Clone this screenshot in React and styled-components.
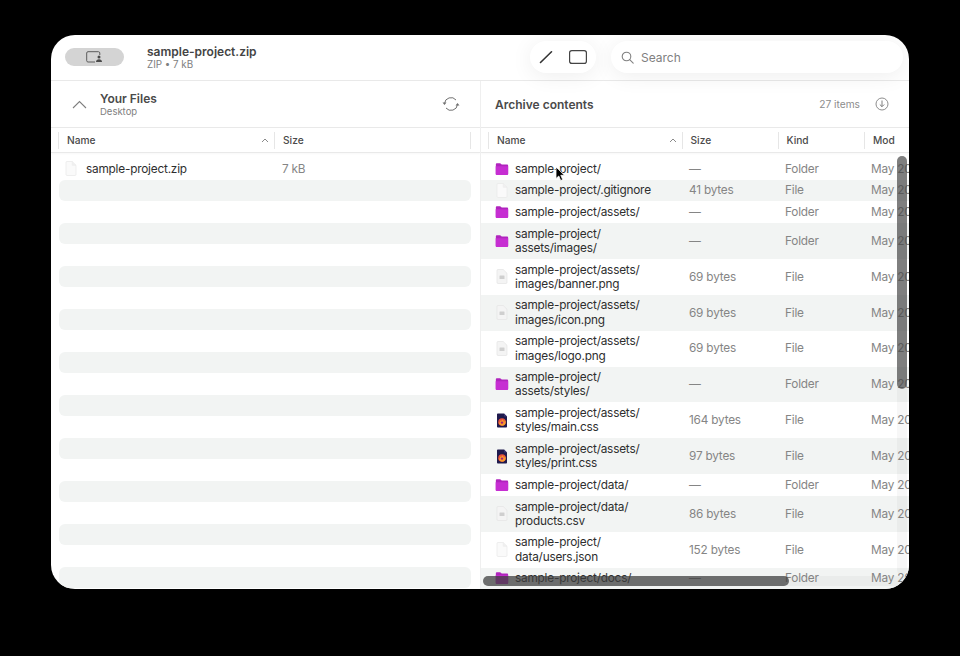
import React from "react";
import styled, { createGlobalStyle } from "styled-components";

const GlobalStyle = createGlobalStyle`
  html, body {
    margin: 0;
    background: #000;
  }
  * {
    box-sizing: border-box;
  }
`;

// data
const rightRows = [
  { name: ["sample-project/"], size: "—", kind: "Folder", icon: "folder" },
  { name: ["sample-project/.gitignore"], size: "41 bytes", kind: "File", icon: "blank" },
  { name: ["sample-project/assets/"], size: "—", kind: "Folder", icon: "folder" },
  { name: ["sample-project/", "assets/images/"], size: "—", kind: "Folder", icon: "folder" },
  { name: ["sample-project/assets/", "images/banner.png"], size: "69 bytes", kind: "File", icon: "doc" },
  { name: ["sample-project/assets/", "images/icon.png"], size: "69 bytes", kind: "File", icon: "doc" },
  { name: ["sample-project/assets/", "images/logo.png"], size: "69 bytes", kind: "File", icon: "doc" },
  { name: ["sample-project/", "assets/styles/"], size: "—", kind: "Folder", icon: "folder" },
  { name: ["sample-project/assets/", "styles/main.css"], size: "164 bytes", kind: "File", icon: "css" },
  { name: ["sample-project/assets/", "styles/print.css"], size: "97 bytes", kind: "File", icon: "css" },
  { name: ["sample-project/data/"], size: "—", kind: "Folder", icon: "folder" },
  { name: ["sample-project/data/", "products.csv"], size: "86 bytes", kind: "File", icon: "doc" },
  { name: ["sample-project/", "data/users.json"], size: "152 bytes", kind: "File", icon: "blank" },
  { name: ["sample-project/docs/"], size: "—", kind: "Folder", icon: "folder" },
];
const placeholders = [...Array(10).keys()];

// styles
const Page = styled.div`
  width: 960px;
  height: 656px;
  padding: 35px 51px 67px;
  background: #000;
  font-family: Inter, "Noto Sans", "Liberation Sans", sans-serif;
`;
const Win = styled.div`
  position: relative;
  width: 858px;
  height: 554px;
  border-radius: 24px;
  background: #fff;
  overflow: hidden;
  display: flex;
  flex-direction: column;
`;
const TopBar = styled.header`
  position: relative;
  z-index: 2;
  height: 46px;
  flex: none;
  display: flex;
  align-items: flex-start;
  padding: 6px 6px 0 14px;
  border-bottom: 1px solid #e9e9e9;
`;
const Toggle = styled.div`
  width: 59px;
  height: 18px;
  margin-top: 7px;
  border-radius: 9px;
  background: #d4d4d4;
  display: flex;
  align-items: center;
  justify-content: center;
`;
const DocInfo = styled.div`
  margin-left: 23px;
  margin-top: 3px;
  flex: 1;
`;
const DocTitle = styled.div`
  font-size: 12px;
  font-weight: 600;
  line-height: 15px;
  color: #444;
`;
const DocMeta = styled.div`
  font-size: 9.8px;
  line-height: 12px;
  color: #808080;
`;
const Pill = styled.div`
  height: 32px;
  border-radius: 16px;
  background: #fff;
  box-shadow: 0 3px 22px rgba(0, 0, 0, 0.07);
  display: flex;
  align-items: center;
`;
const ToolPill = styled(Pill)`
  width: 66px;
  padding: 0 9px;
  gap: 16px;
`;
const SearchPill = styled(Pill)`
  width: 292px;
  margin-left: 15px;
  padding-left: 10px;
  gap: 7px;
  font-size: 12px;
  color: #808080;
`;
const Panes = styled.div`
  flex: 1;
  min-height: 0;
  display: flex;
`;
const Pane = styled.section`
  position: relative;
  width: 429px;
  flex: none;
  overflow: hidden;
  & + & {
    border-left: 1px solid #efefef;
  }
`;
const PaneHead = styled.div`
  height: 47px;
  display: flex;
  align-items: center;
  border-bottom: 1px solid #e9e9e9;
  padding: ${(props) => props.$padding};
`;
const TitleBlock = styled.div`
  margin-left: 13px;
`;
const PaneTitle = styled.div`
  font-size: 12px;
  font-weight: 600;
  line-height: 15px;
  color: #4a4a4a;
`;
const PaneSub = styled.div`
  font-size: 9.5px;
  line-height: 12px;
  color: #808080;
`;
const Spacer = styled.div`
  flex: 1;
`;
const Count = styled.span`
  font-size: 10.2px;
  color: #8c8c8c;
  margin-right: 15px;
`;
const HeadRow = styled.div`
  height: 25px;
  display: grid;
  grid-template-columns: ${(props) => props.$cols};
  align-items: center;
  border-bottom: 1px solid #e9e9e9;
  padding-left: 7px;
  box-shadow: 0 1px 2px rgba(0, 0, 0, 0.03);
`;
const HeadCell = styled.div`
  height: 17px;
  display: flex;
  align-items: center;
  justify-content: space-between;
  padding: 0 5px 0 8px;
  border-left: 1px solid #e6e6e6;
  font-size: 10.2px;
  font-weight: 500;
  color: #4a4a4a;
  white-space: nowrap;
`;
const ListLeft = styled.div`
  padding: 5px 9px 0 8px;
`;
const LeftRow = styled.div`
  height: 21.5px;
  display: grid;
  grid-template-columns: 217px 1fr;
  align-items: center;
  padding-left: 6px;
  border-radius: 6px;
  background: ${(props) => (props.$odd ? "#f2f4f3" : "transparent")};
  font-size: 11.8px;
  letter-spacing: -0.2px;
  color: #2e2e2e;
`;
const NameCell = styled.div`
  display: flex;
  align-items: center;
  gap: ${(props) => props.$gap}px;
`;
const RightRow = styled.div`
  display: grid;
  grid-template-columns: 194.5px 96px 86px 80px;
  align-items: center;
  height: ${(props) => (props.$tall ? "35.9px" : "21.6px")};
  padding-left: 13.5px;
  background: ${(props) => (props.$odd ? "#f2f4f3" : "#fff")};
  font-size: 11.8px;
  letter-spacing: -0.2px;
  line-height: 14.2px;
  color: #2e2e2e;
  white-space: nowrap;
`;
const IconBox = styled.div`
  width: 15px;
  flex: none;
  display: flex;
  justify-content: center;
`;
const Muted = styled.div`
  color: #858585;
`;
const Track = styled.div`
  position: absolute;
  background: rgba(120, 120, 120, 0.06);
  border-radius: 5px;
`;
const VTrack = styled(Track)`
  top: 75px;
  right: 2px;
  width: 10px;
  bottom: 14px;
`;
const HTrack = styled(Track)`
  left: 2px;
  right: 4px;
  bottom: 3px;
  height: 10px;
`;
const VThumb = styled.div`
  position: absolute;
  top: 75px;
  right: 2px;
  width: 10px;
  height: 233px;
  border-radius: 5px;
  background: rgba(70, 70, 70, 0.68);
`;
const HThumb = styled.div`
  position: absolute;
  left: 2px;
  bottom: 3px;
  width: 306px;
  height: 10px;
  border-radius: 5px;
  background: rgba(60, 60, 60, 0.72);
`;
const Rows = styled.div`
  padding-top: 5.2px;
`;
const Cursor = styled.svg`
  position: absolute;
  left: 504px;
  top: 131px;
  z-index: 3;
`;

function FolderIcon() {
  return (
    <svg width="14" height="12" viewBox="0.5 0 14.300 13">
      <path d="M1 1.200C1 .6 1.400.3 2 .3h3.400c.5 0 .8.2 1.100.5l.8.9H13c.8 0 1.300.5 1.300 1.200v8.400c0 .7-.5 1.200-1.300 1.200H2c-.6 0-1-.5-1-1.200z" fill="#b024bd" />
      <path d="M.8 3.400h13.500v8.400c0 .7-.5 1.200-1.300 1.200H2c-.7 0-1.200-.5-1.200-1.200z" fill="#c62ed2" />
    </svg>
  );
}

function BlankIcon() {
  return (
    <svg width="12" height="15" viewBox="0 0 12 15">
      <path d="M1 1.500C1 .9 1.400.5 2 .5h5.200L11 4.300v9.200c0 .6-.4 1-1 1H2c-.6 0-1-.4-1-1z" fill="#fafafa" stroke="#e8e8e8" strokeWidth=".7" />
      <path d="M7.200.5v3.800H11" fill="#f0f0f0" stroke="#e8e8e8" strokeWidth=".5" />
    </svg>
  );
}

function DocIcon() {
  return (
    <svg width="12" height="15" viewBox="0 0 12 15">
      <path d="M1 1.500C1 .9 1.400.5 2 .5h5.200L11 4.300v9.200c0 .6-.4 1-1 1H2c-.6 0-1-.4-1-1z" fill="#f4f4f4" stroke="#e4e4e4" strokeWidth=".7" />
      <rect x="3.500" y="6.500" width="5" height="3.500" rx=".5" fill="#cfcfcf" />
    </svg>
  );
}

function CssIcon() {
  return (
    <svg width="12" height="15" viewBox="0 0 12 15">
      <path d="M1 1.300C1 .8 1.300.5 1.800.5H8l3 3v10.200c0 .5-.3.8-.8.8H1.800c-.5 0-.8-.3-.8-.8z" fill="#1f1a4d" />
      <path d="M8 .5v3h3" fill="#3a3470" />
      <circle cx="6" cy="9" r="3.800" fill="#e8503a" />
      <path d="M2.700 9.500c.4 2 1.900 3.200 3.500 3.200 2 0 3.500-1.600 3.500-3.500 0-.9-.3-1.800-1-2.500.2.900 0 1.800-.7 2.300-.2-1.400-1-2.100-2-2.700.1.900-.5 1.300-.9 1.800-.3-.3-.5-.5-.6-.9-.4.500-.6 1.300-.5 2.300z" fill="#f79a2c" />
      <circle cx="6" cy="9.600" r="1.200" fill="#a11f7c" />
    </svg>
  );
}

const icons = { folder: FolderIcon, blank: BlankIcon, doc: DocIcon, css: CssIcon };

function Caret() {
  return (
    <svg width="8" height="5" viewBox="0 0 8 5">
      <path d="M1 4l3-3 3 3" fill="none" stroke="#8a8a8a" strokeWidth="1" />
    </svg>
  );
}

export default function App() {
  return (
    <Page>
      <GlobalStyle />
      <Win>
        <TopBar>
          <Toggle>
            <svg width="17" height="12" viewBox="0 0 17 12">
              <path d="M9 11H2c-.8 0-1.300-.5-1.300-1.200V2C.7 1.200 1.200.7 2 .7h10.500c.8 0 1.300.5 1.300 1.300v2" fill="none" stroke="#5c5c5c" strokeWidth="1" />
              <circle cx="13" cy="6" r="1.500" fill="#4a4a4a" />
              <path d="M10 11c0-1.800 1.300-2.800 3-2.800s3 1 3 2.800z" fill="#4a4a4a" />
            </svg>
          </Toggle>
          <DocInfo>
            <DocTitle>sample-project.zip</DocTitle>
            <DocMeta>ZIP • 7 kB</DocMeta>
          </DocInfo>
          <ToolPill>
            <svg width="14" height="14" viewBox="0 0 14 14">
              <path d="M1.500 12.500L12.500 1.800" fill="none" stroke="#333" strokeWidth="1.600" strokeLinecap="round" />
            </svg>
            <svg width="18" height="14" viewBox="0 0 18 14">
              <rect x=".6" y=".6" width="16.800" height="12.800" rx="2.200" fill="none" stroke="#444" strokeWidth="1.200" />
            </svg>
          </ToolPill>
          <SearchPill>
            <svg width="13" height="13" viewBox="0 0 13 13">
              <circle cx="5.500" cy="5.500" r="4.300" fill="none" stroke="#808080" strokeWidth="1.100" />
              <path d="M8.700 8.700l3.500 3.500" stroke="#808080" strokeWidth="1.100" strokeLinecap="round" />
            </svg>
            Search
          </SearchPill>
        </TopBar>
        <Panes>
          <Pane>
            <PaneHead $padding="0 20px 0 21px">
              <svg width="15" height="9" viewBox="0 0 15 9">
                <path d="M1 8l6.500-6.500L14 8" fill="none" stroke="#808080" strokeWidth="1.100" />
              </svg>
              <TitleBlock>
                <PaneTitle>Your Files</PaneTitle>
                <PaneSub>Desktop</PaneSub>
              </TitleBlock>
              <Spacer />
              <svg width="18" height="16" viewBox="0 0 18 16">
                <path d="M2.500 7.500A6.500 6.500 0 0 1 14 4M15.500 8.500A6.500 6.500 0 0 1 4 12" fill="none" stroke="#707070" strokeWidth="1" />
                <path d="M.5 6.500h4L2.500 9zM13.500 9.500h4L15.500 7z" fill="#707070" />
              </svg>
            </PaneHead>
            <HeadRow $cols="216px 196px 1px">
              <HeadCell>Name<Caret /></HeadCell>
              <HeadCell>Size</HeadCell>
              <HeadCell />
            </HeadRow>
            <ListLeft>
              <LeftRow>
                <NameCell $gap={9}><BlankIcon />sample-project.zip</NameCell>
                <Muted>7 kB</Muted>
              </LeftRow>
              {placeholders.map((i) => (
                <React.Fragment key={i}>
                  <LeftRow $odd />
                  <LeftRow />
                </React.Fragment>
              ))}
            </ListLeft>
          </Pane>
          <Pane>
            <PaneHead $padding="0 20px 0 14px">
              <PaneTitle>Archive contents</PaneTitle>
              <Spacer />
              <Count>27 items</Count>
              <svg width="14" height="14" viewBox="0 0 14 14">
                <circle cx="7" cy="7" r="6" fill="none" stroke="#808080" strokeWidth=".9" />
                <path d="M7 3.500v6M4.800 7.500L7 9.700l2.200-2.200" fill="none" stroke="#707070" strokeWidth=".9" />
              </svg>
            </PaneHead>
            <HeadRow $cols="193.5px 96px 86.5px 80px">
              <HeadCell>Name<Caret /></HeadCell>
              <HeadCell>Size</HeadCell>
              <HeadCell>Kind</HeadCell>
              <HeadCell>Mod</HeadCell>
            </HeadRow>
            <Rows>
              {rightRows.map((row, i) => {
                const Icon = icons[row.icon];
                return (
                  <RightRow key={row.name.join("")} $odd={i % 2 === 1} $tall={row.name.length > 1}>
                    <NameCell $gap={5.5}>
                      <IconBox><Icon /></IconBox>
                      <div>
                        {row.name.map((line) => <div key={line}>{line}</div>)}
                      </div>
                    </NameCell>
                    <Muted>{row.size}</Muted>
                    <Muted>{row.kind}</Muted>
                    <Muted>May 20</Muted>
                  </RightRow>
                );
              })}
            </Rows>
            <VTrack />
            <HTrack />
            <VThumb />
            <HThumb />
          </Pane>
        </Panes>
        <Cursor width="11" height="16" viewBox="0 0 11 16">
          <path d="M1 1v11.500l2.800-2.500 1.900 4.500 2-.9L5.800 9.300H9.500z" fill="#000" stroke="#fff" strokeWidth=".8" />
        </Cursor>
      </Win>
    </Page>
  );
}
